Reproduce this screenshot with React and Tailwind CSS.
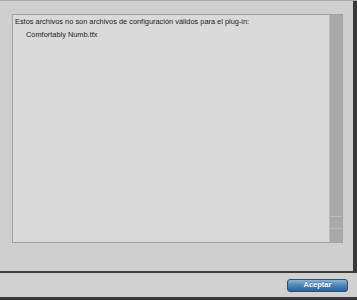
export default function App() {
  return (
    <div className="w-[357px] h-[300px] flex flex-col bg-[#cfcfcf]" style={{ fontFamily: '"Liberation Sans", Arial, sans-serif' }}>
      <div className="h-[271px] flex border-t border-[#a8a8a8]">
        <div className="flex-1 pt-[13px] pl-[12px] pr-[10px] pb-[28px] flex">
          <div className="flex-1 flex border border-[#a3a3a3] bg-[#dadada]">
            <div className="flex-1 pl-[1px] pt-[1px] text-[7.4px] leading-[12px] text-[#1a1a1a]">
              <div className="pl-[1px]">Estos archivos no son archivos de configuración válidos para el plug-in:</div>
              <div className="pl-[12px] mt-[1px]">Comfortably Numb.tfx</div>
            </div>
            <div className="w-[13px] flex flex-col bg-[#a9a9a9] border-l border-[#bdbdbd]">
              <div className="flex-1"></div>
              <div className="h-[12px] border-t border-[#bcbcbc]"></div>
              <div className="h-[14px] border-t border-[#bcbcbc]"></div>
            </div>
          </div>
        </div>
        <div className="w-[4px] bg-[#3a3a3a]"></div>
      </div>
      <div className="h-[2px] bg-[#3d3d3d]"></div>
      <div className="h-[24px] bg-[#d1d1d1] flex items-center justify-end pr-[9px]">
        <div className="w-[61px] h-[13px] rounded-[3px] border border-[#2c4f72] bg-gradient-to-b from-[#8db3d6] via-[#4a84b8] to-[#2d659b] flex items-center justify-center text-white font-bold text-[7.5px] [text-shadow:0_-1px_0_rgba(0,0,0,0.3)]">
          Aceptar
        </div>
      </div>
      <div className="flex-1 bg-[#3a3a3a]"></div>
    </div>
  );
}
